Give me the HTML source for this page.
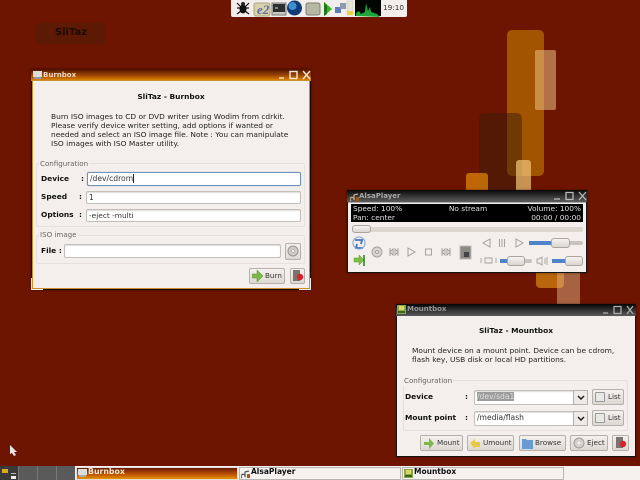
<!DOCTYPE html>
<html><head><meta charset="utf-8"><style>
html,body{margin:0;padding:0;background:#6d1500}
#r{position:relative;width:640px;height:480px;overflow:hidden;background:#6d1500;font-family:"DejaVu Sans",sans-serif;font-size:7.45px;color:#222;filter:blur(.3px)}
#r div,#r svg{position:absolute}
.t{white-space:nowrap;line-height:10px}
.b{font-weight:bold;color:#111}
.e{background:#fff;border:1px solid #c4bfba;border-radius:2px;box-sizing:border-box;box-shadow:inset 0 1px 1px #ddd;padding-left:2px;line-height:12px;white-space:nowrap;color:#333;font-size:7.6px}
.btn{background:linear-gradient(#f4f1ee,#dcd8d2);border:1px solid #b5b0aa;border-radius:2px;box-sizing:border-box}
.fr{border:1px solid #e6e1dc;box-sizing:border-box;border-radius:2px}
.lb{background:#f4efec;color:#666;padding:0 1px;white-space:nowrap;line-height:10px;font-size:7.1px}
.tt{font-weight:bold;font-size:7px;line-height:10px;white-space:nowrap}
.th{background:linear-gradient(#f6f3f0,#d8d4ce);border:1px solid #aaa59f;border-radius:3px;box-sizing:border-box}
.d{font-size:7.4px;color:#e0e0e0}
.k{font-size:7.5px}
.c{color:#333;font-size:7.2px}
</style></head><body><div id="r">

<!-- wallpaper -->
<div style="left:507px;top:30px;width:37px;height:146px;background:#a35400;border-radius:5px"></div>
<div style="left:535px;top:50px;width:21px;height:60px;background:rgba(235,190,130,.55);border-radius:2px"></div>
<div style="left:479px;top:113px;width:43px;height:90px;background:rgba(60,30,10,.5);border-radius:5px"></div>
<div style="left:516px;top:160px;width:15px;height:40px;background:rgba(240,200,120,.7);border-radius:3px"></div>
<div style="left:466px;top:173px;width:22px;height:30px;background:rgba(220,130,10,.75);border-radius:3px"></div>
<div style="left:536px;top:260px;width:28px;height:28px;background:#b8650c;border-radius:4px"></div>
<div style="left:557px;top:260px;width:23px;height:50px;background:rgba(225,175,130,.5)"></div>

<!-- desktop label -->
<div style="left:36px;top:23px;width:70px;height:21px;background:#5c1a05;border-radius:3px"></div>
<div class="t" style="left:36px;top:28px;width:70px;text-align:center;font-weight:bold;font-size:10px;color:#1c0a03">SliTaz</div>

<!-- top panel -->
<div style="left:231px;top:0;width:176px;height:17px;background:#f3eeeb;border-radius:0 0 2px 2px"></div>
<svg style="left:231px;top:0" width="176" height="17">
<g stroke="#111" stroke-width="1.2" fill="none"><path d="M6 3l4 4M6 8h4M6 14l4-3M18 3l-4 4M18 8h-4M18 14l-4-3"/></g>
<ellipse cx="12" cy="9" rx="3.5" ry="4.5" fill="#111"/><circle cx="12" cy="4" r="2" fill="#222"/>
<rect x="23" y="3" width="16" height="13" rx="2" fill="#d9d2a8" stroke="#a9a488"/>
<text x="26" y="14" font-family="Liberation Serif" font-style="italic" font-weight="bold" font-size="13" fill="#5c6aa0">e2</text>
<rect x="41" y="3" width="14" height="12" fill="#c8c8c0" stroke="#777"/><rect x="42" y="4" width="12" height="8" fill="#2c2f2f"/><path d="M44 8h3" stroke="#ddd"/>
<circle cx="63.500" cy="8" r="7.500" fill="#103c78"/><circle cx="61.500" cy="6" r="4" fill="#3f90d0"/>
<rect x="75" y="3" width="14" height="12" rx="2" fill="#b5b8a2" stroke="#7d8070"/>
<path d="M93 2v14l8-7z" fill="#35b12a"/><path d="M93 2v14l3-2V6z" fill="#1a7a15"/>
<rect x="104" y="7" width="6" height="6" fill="#5a7eb8"/><rect x="109" y="3" width="6" height="6" fill="#8e9ab0"/>
<rect x="116" y="1" width="6" height="14" fill="#e6e3d8" stroke="#c6c3b8" stroke-width=".5"/><rect x="116" y="11" width="6" height="4" fill="#e8d24a"/>
<rect x="124" y="0" width="26" height="16" fill="#020502"/>
<path d="M125 16v-3l3-2 2 3 2-1 2-1 1-9 2 8 2-4 1 5 3 1 3 1 3 3z" fill="#1fa83a"/>
</svg>
<div class="t" style="left:383px;top:3px;color:#333;font-size:7.3px">19:10</div>

<!-- Burnbox -->
<div style="left:31px;top:69px;width:280px;height:221px;background:#1a0a04;box-shadow:0 0 2px rgba(0,0,0,.5)"></div>
<div style="left:31px;top:278px;width:12px;height:12px;background:#eee"></div>
<div style="left:299px;top:278px;width:12px;height:12px;background:#eee"></div>
<div style="left:31px;top:69px;width:280px;height:12px;background:linear-gradient(#4c1000,#a04a00 55%,#e89000)"></div>
<div style="left:32px;top:80px;width:278px;height:209px;background:#f4efec;border:1px solid #c89028;box-sizing:border-box"></div>
<svg style="left:33px;top:71px" width="10" height="9"><rect width="9" height="6" fill="#ddd"/><rect x="1" y="6" width="7" height="2" fill="#999"/></svg>
<div class="tt" style="left:43px;top:70px;color:#f0d8c0">Burnbox</div>
<svg style="left:276px;top:70px" width="35" height="10" fill="none" stroke="#f4e8dc" stroke-width="1.400"><path d="M3 8h5"/><rect x="14" y="1.500" width="7" height="7"/><path d="M27 1l7 8M34 1l-7 8"/></svg>

<div class="t b" style="left:33px;top:92px;width:276px;text-align:center">SliTaz - Burnbox</div>
<div class="t" style="left:51px;top:112px;line-height:9px">Burn ISO images to CD or DVD writer using Wodim from cdrkit.<br>Please verify device writer setting, add options if wanted or<br>needed and select an ISO image file. Note : You can manipulate<br>ISO images with ISO Master utility.</div>
<div class="fr" style="left:36px;top:163px;width:269px;height:64px"></div>
<div class="lb" style="left:39px;top:159px">Configuration</div>
<div class="t b" style="left:41px;top:174px">Device</div><div class="t b" style="left:81px;top:174px">:</div>
<div class="e" style="left:87px;top:172px;width:214px;height:14px;border-color:#6f93bb;box-shadow:0 0 1px #89a8cc">/dev/cdrom<span style="border-left:1px solid #222"></span></div>
<div class="t b" style="left:41px;top:192px">Speed</div><div class="t b" style="left:79px;top:192px">:</div>
<div class="e" style="left:86px;top:191px;width:215px;height:13px">1</div>
<div class="t b" style="left:41px;top:210px">Options</div><div class="t b" style="left:79px;top:210px">:</div>
<div class="e" style="left:86px;top:209px;width:215px;height:13px;font-size:7.4px">-eject -multi</div>
<div class="fr" style="left:36px;top:235px;width:269px;height:29px"></div>
<div class="lb" style="left:39px;top:230px">ISO image</div>
<div class="t b" style="left:41px;top:246px">File :</div>
<div class="e" style="left:64px;top:244px;width:217px;height:14px"></div>
<div class="btn" style="left:285px;top:243px;width:16px;height:17px"></div>
<svg style="left:287px;top:245px" width="12" height="12"><circle cx="6" cy="6" r="5" fill="#cfcbc6" stroke="#9a9690"/><circle cx="6" cy="6" r="1.500" fill="#eee" stroke="#999" stroke-width=".5"/></svg>
<div class="btn" style="left:249px;top:268px;width:36px;height:16px"></div>
<svg style="left:252px;top:270px" width="11" height="12"><path d="M0 4h5V0l6 6-6 6V8H0z" fill="#7cb84a" stroke="#5a9030" stroke-width=".5"/></svg>
<div class="t c" style="left:265px;top:271px">Burn</div>
<div class="btn" style="left:290px;top:268px;width:15px;height:16px"></div>
<svg style="left:292px;top:270px" width="12" height="12"><rect x="1" y="0" width="7" height="11" fill="#7a7470"/><circle cx="8" cy="7" r="3.200" fill="#d8232a"/></svg>

<!-- AlsaPlayer -->
<div style="left:347px;top:190px;width:240px;height:83px;background:#161616;box-shadow:0 0 2px rgba(0,0,0,.5)"></div>
<div style="left:347px;top:190px;width:240px;height:12px;background:linear-gradient(#080808,#5c5c5c)"></div>
<svg style="left:350px;top:192px" width="10" height="10"><path d="M1 9a2 2 0 1 1 3-1V3l4-1" fill="none" stroke="#c8b090" stroke-width="1.200"/><rect x="6" y="5" width="3" height="4" fill="#a05a20"/></svg>
<div class="tt" style="left:359px;top:191px;color:#a8a8a8">AlsaPlayer</div>
<svg style="left:552px;top:191px" width="35" height="10" fill="none" stroke="#b8b8b8" stroke-width="1.300"><path d="M2 8h6"/><rect x="14" y="1.500" width="7" height="7"/><path d="M27 1l7 8M34 1l-7 8"/></svg>
<div style="left:348px;top:202px;width:238px;height:70px;background:#f4efec;border-top:1px solid #aaa;box-sizing:border-box"></div>
<div style="left:351px;top:204px;width:232px;height:18px;background:#000"></div>
<div class="t d" style="left:353px;top:204px">Speed: 100%</div>
<div class="t d" style="left:353px;top:213px">Pan: center</div>
<div class="t d" style="left:351px;top:204px;width:234px;text-align:center">No stream</div>
<div class="t d" style="right:59px;top:204px">Volume: 100%</div>
<div class="t d" style="right:59px;top:213px">00:00 / 00:00</div>
<div style="left:352px;top:227px;width:231px;height:5px;background:#dcd6ce;border-radius:2px"></div>
<div class="th" style="left:352px;top:225px;width:19px;height:8px"></div>
<svg style="left:350px;top:236px" width="136" height="32" fill="none" stroke="#a5a19c">
<path d="M5 4h7l-1 4M13 12H6l1-4" stroke="#3d74c0" stroke-width="1.800"/>
<circle cx="9" cy="7" r="6" stroke="#7aa0d8"/>
<path d="M4 22h5v-3l5 5-5 5v-3H4z" fill="#7cc042" stroke="#5a9a2a" stroke-width=".5"/><path d="M14 19v11" stroke="#2a7a20" stroke-width="1.500"/>
<circle cx="27" cy="16" r="5" fill="#d8d4d0"/><circle cx="27" cy="16" r="1.500" fill="#eee"/>
<path d="M40 12v8M48 12v8M40 16l3-3v6zM48 16l-3-3v6z"/>
<path d="M58 12l7 4-7 4z"/>
<rect x="75.500" y="13" width="6" height="6"/>
<path d="M92 12v8M100 12v8M92 16l3-3v6zM100 16l-3-3v6z"/>
<rect x="110" y="10" width="11" height="13" fill="#8c8884" stroke="#bbb"/><rect x="114" y="16" width="5" height="5" fill="#444" stroke="none"/>
</svg>
<svg style="left:478px;top:236px" width="50" height="32" fill="none" stroke="#a5a19c">
<path d="M12 3l-7 4 7 4z"/><path d="M21.500 3v8M24 3v8M26.500 3v8"/><path d="M38 3l7 4-7 4z"/>
<path d="M3 22v5M7 22h7v5H7zM18 22v5" stroke-width=".9"/>
</svg>
<svg style="left:535px;top:255px" width="14" height="12" fill="none" stroke="#a5a19c" stroke-width=".9"><path d="M2 4v4h2l3 2V2L4 4zM10 3v6M12 2v8"/></svg>
<div style="left:529px;top:241px;width:54px;height:4px;background:#c8c3bc;border-radius:2px"></div>
<div style="left:529px;top:241px;width:26px;height:4px;background:#4f85c8"></div>
<div class="th" style="left:551px;top:238px;width:19px;height:10px"></div>
<div style="left:500px;top:259px;width:32px;height:4px;background:#c8c3bc;border-radius:2px"></div>
<div style="left:500px;top:259px;width:10px;height:4px;background:#4f85c8"></div>
<div class="th" style="left:507px;top:256px;width:18px;height:10px"></div>
<div style="left:552px;top:259px;width:31px;height:4px;background:#4f85c8"></div>
<div class="th" style="left:565px;top:256px;width:18px;height:10px"></div>

<!-- Mountbox -->
<div style="left:396px;top:304px;width:240px;height:153px;background:#161616;box-shadow:0 0 2px rgba(0,0,0,.5)"></div>
<div style="left:396px;top:304px;width:240px;height:12px;background:linear-gradient(#050505,#5a5a5a)"></div>
<svg style="left:397px;top:305px" width="10" height="10"><rect width="9" height="9" fill="#8aa84a"/><rect x="2" y="1" width="5" height="4" fill="#d8d860"/><rect x="1" y="6" width="7" height="2" fill="#3a6a20"/></svg>
<div class="tt" style="left:407px;top:304px;color:#999">Mountbox</div>
<svg style="left:600px;top:305px" width="35" height="10" fill="none" stroke="#aaa" stroke-width="1.300"><path d="M3 8h5"/><rect x="14" y="1.500" width="7" height="7"/><path d="M27 1l6 8M33 1l-6 8"/></svg>
<div style="left:397px;top:316px;width:238px;height:140px;background:#f4efec"></div>
<div class="t b" style="left:397px;top:326px;width:238px;text-align:center">SliTaz - Mountbox</div>
<div class="t" style="left:412px;top:346px;line-height:9px">Mount device on a mount point. Device can be cdrom,<br>flash key, USB disk or local HD partitions.</div>
<div class="fr" style="left:403px;top:380px;width:225px;height:51px"></div>
<div class="lb" style="left:403px;top:376px">Configuration</div>
<div class="t b" style="left:405px;top:392px">Device</div><div class="t b" style="left:465px;top:392px">:</div>
<div class="e" style="left:474px;top:390px;width:114px;height:15px;padding-left:2px;color:#999"><span style="background:#9c9c9c;color:#ddd">/dev/sda1</span></div>
<div style="left:573px;top:390px;width:15px;height:15px;background:#eeeae6;border:1px solid #b5b0aa;box-sizing:border-box"></div>
<svg style="left:577px;top:395px" width="8" height="5"><path d="M1 1l3 3 3-3" fill="none" stroke="#222" stroke-width="1.500"/></svg>
<div class="btn" style="left:592px;top:389px;width:32px;height:16px"></div>
<div style="left:595px;top:392px;width:10px;height:10px;background:#e8e8e4;border:1px solid #999;box-sizing:border-box;border-radius:1px"></div>
<div class="t c" style="left:608px;top:392px">List</div>
<div class="t b" style="left:405px;top:413px">Mount point</div><div class="t b" style="left:465px;top:413px">:</div>
<div class="e" style="left:474px;top:411px;width:114px;height:15px;padding-left:2px">/media/flash</div>
<div style="left:573px;top:411px;width:15px;height:15px;background:#eeeae6;border:1px solid #b5b0aa;box-sizing:border-box"></div>
<svg style="left:577px;top:416px" width="8" height="5"><path d="M1 1l3 3 3-3" fill="none" stroke="#222" stroke-width="1.500"/></svg>
<div class="btn" style="left:592px;top:410px;width:32px;height:16px"></div>
<div style="left:595px;top:413px;width:10px;height:10px;background:#e8e8e4;border:1px solid #999;box-sizing:border-box;border-radius:1px"></div>
<div class="t c" style="left:608px;top:413px">List</div>

<div class="btn" style="left:420px;top:435px;width:43px;height:16px"></div>
<svg style="left:424px;top:438px" width="11" height="11"><path d="M0 4h5V0l5 5.500-5 5.500V7H0z" fill="#7cb84a"/></svg>
<div class="t c" style="left:437px;top:438px">Mount</div>
<div class="btn" style="left:467px;top:435px;width:47px;height:16px"></div>
<svg style="left:470px;top:438px" width="11" height="11"><path d="M10 9H5v2L0 5l5-4v3h5z" fill="#e8c840"/></svg>
<div class="t c" style="left:483px;top:438px">Umount</div>
<div class="btn" style="left:519px;top:435px;width:47px;height:16px"></div>
<svg style="left:522px;top:438px" width="11" height="11"><path d="M0 1h4l1 1h6v9H0z" fill="#6a9ad4"/></svg>
<div class="t c" style="left:535px;top:438px">Browse</div>
<div class="btn" style="left:570px;top:435px;width:38px;height:16px"></div>
<svg style="left:573px;top:437px" width="12" height="12"><circle cx="6" cy="6" r="5" fill="#d4d0cc" stroke="#a09c98"/><circle cx="6" cy="6" r="1.500" fill="#eee"/></svg>
<div class="t c" style="left:587px;top:438px">Eject</div>
<div class="btn" style="left:612px;top:435px;width:17px;height:16px"></div>
<svg style="left:615px;top:437px" width="12" height="12"><rect x="1" y="0" width="7" height="11" fill="#7a7470"/><circle cx="8" cy="7" r="3.200" fill="#d8232a"/></svg>

<!-- cursor -->
<svg style="left:9px;top:445px" width="9" height="12"><path d="M1 0v9l2-1 2 3 2-1-2-3h3z" fill="#e8e6e4"/></svg>

<!-- taskbar -->
<div style="left:0;top:466px;width:640px;height:14px;background:#f4f1ef"></div>
<div style="left:0;top:466px;width:75px;height:14px;background:#5a5a5a"></div>
<div style="left:0;top:466px;width:18px;height:14px;background:#3a3a3a"></div>
<div style="left:2px;top:469px;width:6px;height:4px;background:#e0a820"></div>
<div style="left:11px;top:473px;width:5px;height:1px;background:#bbb"></div>
<div style="left:11px;top:476px;width:5px;height:3px;background:#eee"></div>
<div style="left:37px;top:466px;width:1px;height:14px;background:#777"></div>
<div style="left:56px;top:466px;width:1px;height:14px;background:#777"></div>
<div style="left:18px;top:466px;width:1px;height:14px;background:#777"></div>
<div style="left:76px;top:467px;width:162px;height:13px;background:linear-gradient(#6a1800,#c05800 60%,#e89000);border:1px solid #ddd;box-sizing:border-box"></div>
<svg style="left:78px;top:469px" width="10" height="10"><rect width="9" height="6" fill="#ddd"/><rect x="1" y="6" width="7" height="2" fill="#aaa"/></svg>
<div class="t k" style="left:88px;top:467px;font-weight:bold;color:#f4e4d4;font-size:7.8px">Burnbox</div>
<div style="left:239px;top:467px;width:162px;height:13px;background:#f4f1ef;border:1px solid #b8b4b0;box-sizing:border-box"></div>
<svg style="left:241px;top:469px" width="10" height="10"><path d="M1 9a2 2 0 1 1 3-1V3l4-1" fill="none" stroke="#555" stroke-width="1.200"/><rect x="6" y="5" width="3" height="4" fill="#a05a20"/></svg>
<div class="t b k" style="left:251px;top:467px">AlsaPlayer</div>
<div style="left:402px;top:467px;width:162px;height:13px;background:#f4f1ef;border:1px solid #b8b4b0;box-sizing:border-box"></div>
<svg style="left:404px;top:469px" width="10" height="10"><rect width="9" height="9" fill="#8aa84a"/><rect x="2" y="1" width="5" height="4" fill="#d8d860"/><rect x="1" y="6" width="7" height="2" fill="#3a6a20"/></svg>
<div class="t b k" style="left:414px;top:467px">Mountbox</div>
</div></body></html>
